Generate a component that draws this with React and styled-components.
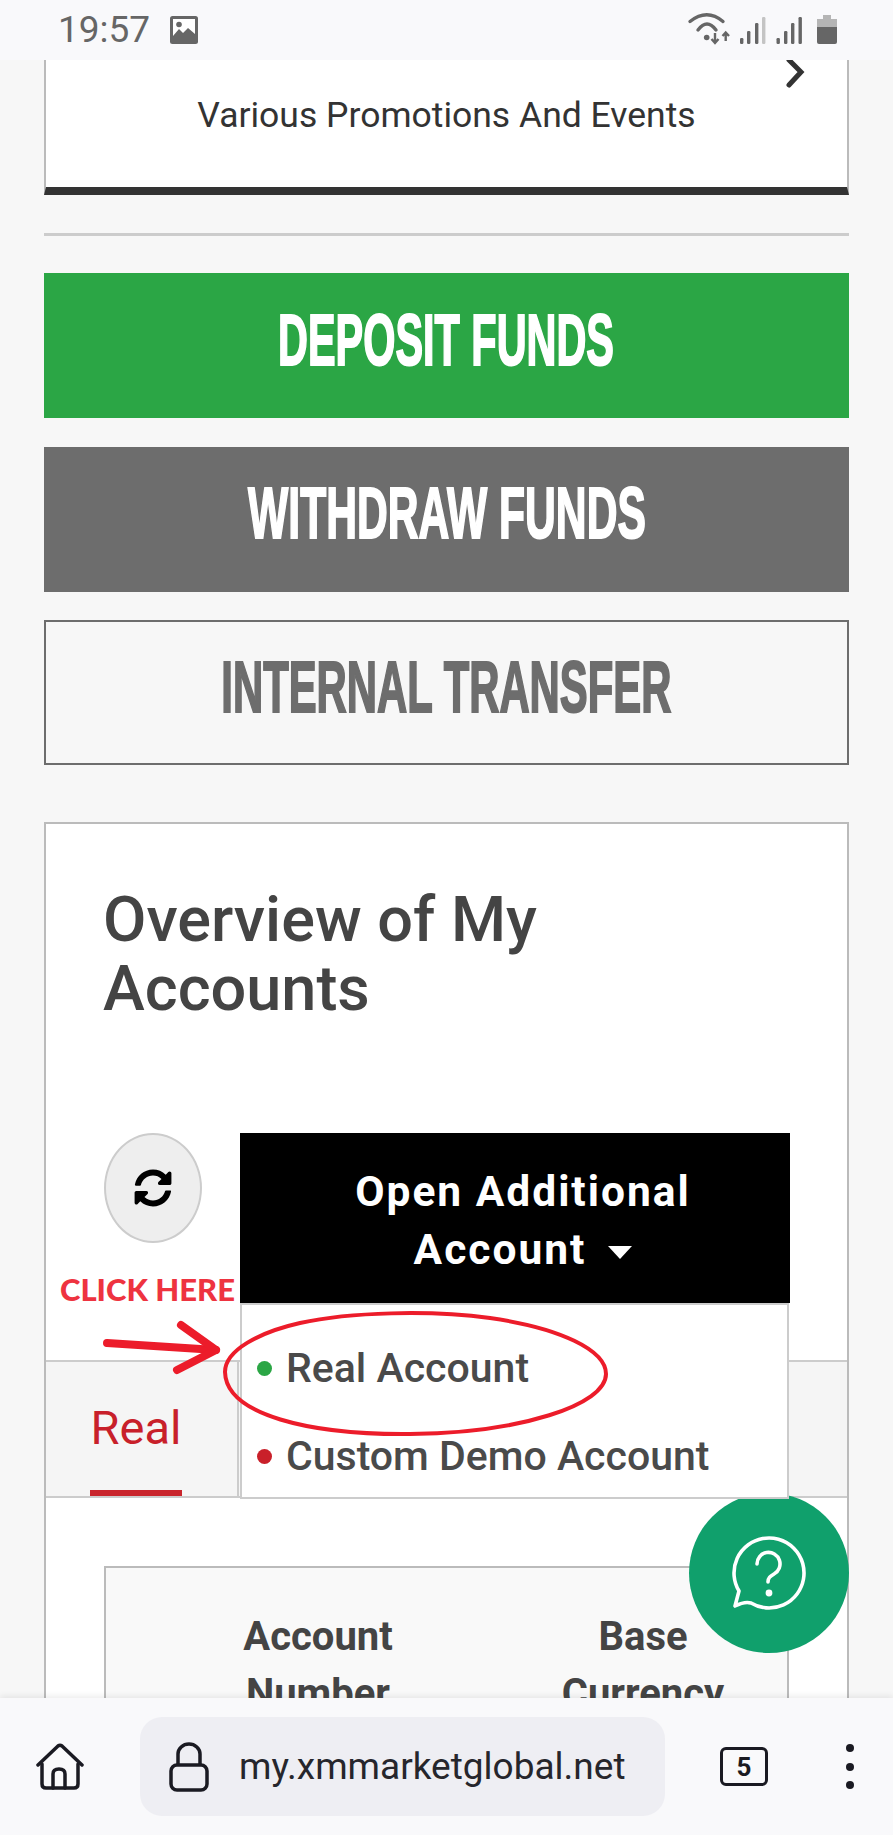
import React from 'react'
import styled, { createGlobalStyle } from 'styled-components'
import { FaSyncAlt } from 'react-icons/fa'

const GlobalStyle = createGlobalStyle`
  * { box-sizing: border-box; }
  html, body { margin: 0; padding: 0; background: #f7f7f7; }
  body { font-family: Roboto, "Liberation Sans", sans-serif; }
`

const Screen = styled.div`
  position: relative;
  width: 893px;
  height: 1835px;
  display: flex;
  flex-direction: column;
  overflow: hidden;
  background: #f7f7f7;
`

const StatusBar = styled.header`
  height: 60px;
  flex: none;
  display: flex;
  align-items: center;
  justify-content: space-between;
  padding: 0 43px 0 58px;
  background: #f9f9fb;
`

const StatusLeft = styled.div`
  display: flex;
  align-items: center;
  gap: 20px;
`

const Time = styled.span`
  font-size: 37px;
  line-height: 60px;
  color: #666;
`

const Main = styled.main`
  position: relative;
  flex: 1;
  min-height: 0;
  overflow: hidden;
  padding: 0 44px;
`

const PromoCard = styled.section`
  position: relative;
  height: 135px;
  display: flex;
  justify-content: center;
  padding-top: 31px;
  background: #fff;
  border-left: 2px solid #bbb;
  border-right: 2px solid #bbb;
  border-bottom: 8px solid #333;
  font-size: 35.5px;
  line-height: 48px;
  color: #333;
`

const Chevron = styled.svg`
  position: absolute;
  right: 40px;
  top: 0;
`

const Rule = styled.hr`
  height: 3px;
  margin: 38px 0 37px;
  border: 0;
  background: #ccc;
`

const ActionList = styled.div`
  display: flex;
  flex-direction: column;
  gap: 28.5px;
`

const ActionButton = styled.button`
  height: 145px;
  display: flex;
  align-items: center;
  justify-content: center;
  padding: 0 0 12px;
  font-family: "Liberation Sans", Arial, sans-serif;
  font-weight: 700;
  font-size: 72px;
  line-height: 1;
  -webkit-text-stroke: 2px ${p => p.$color};
  background: ${p => p.$bg};
  color: ${p => p.$color};
  border: ${p => (p.$outlined ? '2px solid #6d6d6d' : '0')};
`

const Squeezed = styled.span`
  display: inline-block;
  white-space: nowrap;
  transform: scaleX(${p => p.$x});
`

const AccountsCard = styled.section`
  margin-top: 57px;
  background: #fff;
  border: 2px solid #bbb;
  height: 1000px;
`

const CardHead = styled.div`
  padding: 61px 58px 57px;
`

const Title = styled.h2`
  margin: 0 0 110px -1px;
  font-size: 63px;
  line-height: 69px;
  font-weight: 500;
  color: #444;
`

const Toolbar = styled.div`
  display: flex;
  align-items: flex-start;
  gap: 38px;
`

const RefreshButton = styled.button`
  width: 98px;
  height: 110px;
  flex: none;
  display: flex;
  align-items: center;
  justify-content: center;
  padding: 0;
  background: #eee;
  border: 2px solid #ccc;
  border-radius: 50%;
  color: #000;
  font-size: 38px;
`

const OpenWrap = styled.div`
  position: relative;
  width: 550px;
  flex: none;
  z-index: 3;
`

const OpenButton = styled.button`
  display: block;
  width: 100%;
  height: 170px;
  padding: 6px 52px 0 68px;
  background: #000;
  color: #fff;
  border: 0;
  font-family: Roboto, sans-serif;
  font-weight: 700;
  font-size: 42.5px;
  line-height: 58px;
  letter-spacing: 2px;
  text-align: center;
`

const Caret = styled.span`
  display: inline-block;
  margin-left: 22px;
  vertical-align: middle;
  border-left: 12px solid transparent;
  border-right: 12px solid transparent;
  border-top: 13px solid #fff;
`

const Dropdown = styled.ul`
  position: absolute;
  top: 100%;
  left: 0;
  width: 549px;
  height: 196px;
  margin: 0;
  padding: 38px 0 0;
  list-style: none;
  background: #fff;
  border: 2px solid #ccc;
  display: flex;
  flex-direction: column;
  gap: 38px;
`

const DropdownItem = styled.li`
  display: flex;
  align-items: center;
  gap: 14px;
  height: 50px;
  padding-left: 15px;
  font-size: 41px;
  font-weight: 500;
  color: #4a4a4a;
  &::before {
    content: '';
    width: 15px;
    height: 15px;
    border-radius: 50%;
    background: ${p => p.$dot};
  }
`

const Tabs = styled.div`
  height: 138px;
  background: #f5f5f5;
  border-top: 2px solid #ccc;
  border-bottom: 2px solid #ccc;
`

const Tab = styled.div`
  position: relative;
  width: 193px;
  height: 100%;
  padding: 38px 11px 0 0;
  text-align: center;
  border-right: 2px solid #ccc;
  font-size: 47px;
  line-height: 56px;
  color: #c8202a;
  &::after {
    content: '';
    position: absolute;
    left: 44px;
    bottom: 0;
    width: 92px;
    height: 6px;
    background: #c9252c;
  }
`

const TableBox = styled.div`
  margin: 68px 58px 0;
  padding-top: 40px;
  height: 400px;
  background: #f9f9f9;
  border: 2px solid #bbb;
  display: grid;
  grid-template-columns: 424px 226px;
  align-content: start;
`

const HeadCell = styled.div`
  text-align: center;
  font-size: 40px;
  line-height: 57px;
  font-weight: 700;
  color: #444;
`

const HelpFab = styled.button`
  position: absolute;
  right: 44px;
  bottom: 45px;
  z-index: 2;
  width: 160px;
  height: 160px;
  padding: 0;
  border: 0;
  border-radius: 50%;
  background: #10a06c;
  display: flex;
`

const BottomBar = styled.footer`
  position: relative;
  z-index: 4;
  height: 137px;
  flex: none;
  display: flex;
  align-items: center;
  padding: 0 0 0 36px;
  background: #f9f9fb;
  box-shadow: 0 -2px 6px rgba(0, 0, 0, 0.08);
`

const UrlPill = styled.div`
  width: 525px;
  height: 99px;
  margin: 0 55px 0 56px;
  display: flex;
  align-items: center;
  gap: 30px;
  padding-left: 29px;
  background: #eeeef3;
  border-radius: 22px;
  font-size: 37px;
  color: #26262c;
`

const TabCount = styled.div`
  width: 48px;
  height: 39px;
  flex: none;
  display: flex;
  align-items: center;
  justify-content: center;
  border: 3.5px solid #1a1a22;
  border-radius: 6px;
  font-size: 26px;
  font-weight: 700;
  color: #1a1a22;
`

const MenuDots = styled.div`
  margin-left: 78px;
  display: flex;
  flex-direction: column;
  gap: 10.5px;
  span {
    width: 8px;
    height: 8px;
    border-radius: 50%;
    background: #1a1a22;
  }
`

const ClickHere = styled.div`
  position: absolute;
  left: 60px;
  top: 1271px;
  z-index: 5;
  font-family: Lato, "Open Sans", sans-serif;
  font-weight: 900;
  font-size: 31px;
  line-height: 36px;
  color: #ee3340;
`

const Markup = styled.svg`
  position: absolute;
  left: 0;
  top: 1300px;
  z-index: 5;
  pointer-events: none;
`

const ImageIcon = () => (
  <svg width="28" height="28" viewBox="0 0 28 28">
    <rect width="28" height="28" rx="2.5" fill="#666" />
    <rect x="3" y="3" width="22" height="17" fill="#fff" />
    <circle cx="9" cy="8.5" r="2.8" fill="#666" />
    <path d="M3 20 L9 13 L13 17 L18 12 L25 18 V21 H3Z" fill="#666" />
  </svg>
)

const StatusIcons = () => (
  <svg width="170" height="60" viewBox="0 0 170 60">
    <g fill="none" stroke="#666" strokeWidth="3.4" strokeLinecap="round">
      <path d="M10 21.5 Q27 8 43 21.5" />
      <path d="M18 30 Q27 18 36 30" />
    </g>
    <circle cx="26.7" cy="37.5" r="2.8" fill="#666" />
    <g fill="none" stroke="#666" strokeWidth="2.4">
      <path d="M35 33 V42 M31.5 39 L35 43 L38.5 39" />
      <path d="M45.7 41 V33 M42.5 36 L45.7 32.5 L49 36" />
    </g>
    <g fill="#666">
      <rect x="60" y="38" width="3.4" height="6" rx="1.2" />
      <rect x="67" y="31" width="3.4" height="13" rx="1.2" />
      <rect x="75" y="23" width="3.4" height="21" rx="1.2" />
      <rect x="82" y="17" width="3.4" height="27" rx="1.2" fill="#c4c4c4" />
      <rect x="96.5" y="38" width="3.4" height="6" rx="1.2" />
      <rect x="104" y="31" width="3.4" height="13" rx="1.2" />
      <rect x="111" y="23" width="3.4" height="21" rx="1.2" />
      <rect x="118.5" y="17" width="3.4" height="27" rx="1.2" />
    </g>
    <path d="M143 15 H151 V19 H157 V27 H137 V19 H143Z" fill="#b5b5b5" />
    <path d="M137 27 H157 V42 a2 2 0 0 1 -2 2 H139 a2 2 0 0 1 -2 -2Z" fill="#666" />
  </svg>
)

const HelpIcon = () => (
  <svg width="160" height="160" viewBox="0 0 160 160" fill="none" stroke="#fff" strokeWidth="3.6" strokeLinecap="round" strokeLinejoin="round">
    <path d="M50 98 A35 35 0 1 1 62 110 Q56 108 46 113 Z" />
    <path d="M68 71 a11.5 11.5 0 1 1 17 10 c-4 2.5 -6 4 -6 8" />
    <circle cx="80" cy="100" r="1.6" fill="#fff" />
  </svg>
)

const HomeIcon = () => (
  <svg width="48" height="48" viewBox="0 0 48 48" fill="none" stroke="#1a1a22" strokeWidth="3.5" strokeLinecap="round" strokeLinejoin="round">
    <path d="M2 22 L22 3 Q24 1.5 26 3 L46 22" />
    <path d="M6 21 V41 Q6 45 10 45 H38 Q42 45 42 41 V21" />
    <path d="M17 45 V31 Q17 26 23 26 Q29 26 29 31 V45" />
  </svg>
)

const LockIcon = () => (
  <svg width="40" height="50" viewBox="0 0 40 50" fill="none" stroke="#1a1a22" strokeWidth="3.5" strokeLinejoin="round">
    <path d="M9 23 V12 A11 10 0 0 1 31 12 V23" />
    <rect x="2" y="23" width="36" height="25" rx="6" />
  </svg>
)

export default function App() {
  return (
    <Screen>
      <GlobalStyle />
      <StatusBar>
        <StatusLeft>
          <Time>19:57</Time>
          <ImageIcon />
        </StatusLeft>
        <StatusIcons />
      </StatusBar>

      <Main>
        <PromoCard>
          Various Promotions And Events
          <Chevron width="22" height="28" viewBox="0 0 22 28" fill="none" stroke="#333" strokeWidth="5" strokeLinecap="round">
            <path d="M4 0 L16 12 L4 25" />
          </Chevron>
        </PromoCard>
        <Rule />

        <ActionList>
          <ActionButton $bg="#2ba645" $color="#fff"><Squeezed $x={0.575}>DEPOSIT FUNDS</Squeezed></ActionButton>
          <ActionButton $bg="#6d6d6d" $color="#fff"><Squeezed $x={0.592}>WITHDRAW FUNDS</Squeezed></ActionButton>
          <ActionButton $bg="#f7f7f7" $color="#6d6d6d" $outlined><Squeezed $x={0.581}>INTERNAL TRANSFER</Squeezed></ActionButton>
        </ActionList>

        <AccountsCard>
          <CardHead>
            <Title>Overview of My Accounts</Title>
            <Toolbar>
              <RefreshButton><FaSyncAlt /></RefreshButton>
              <OpenWrap>
                <OpenButton>Open Additional Account<Caret /></OpenButton>
                <Dropdown>
                  <DropdownItem $dot="#2ba645">Real Account</DropdownItem>
                  <DropdownItem $dot="#c9202a">Custom Demo Account</DropdownItem>
                </Dropdown>
              </OpenWrap>
            </Toolbar>
          </CardHead>
          <Tabs>
            <Tab>Real</Tab>
          </Tabs>
          <TableBox>
            <HeadCell>Account<br />Number</HeadCell>
            <HeadCell>Base<br />Currency</HeadCell>
          </TableBox>
        </AccountsCard>

        <HelpFab><HelpIcon /></HelpFab>
      </Main>

      <BottomBar>
        <HomeIcon />
        <UrlPill>
          <LockIcon />
          my.xmmarketglobal.net
        </UrlPill>
        <TabCount>5</TabCount>
        <MenuDots><span /><span /><span /></MenuDots>
      </BottomBar>

      <ClickHere>CLICK HERE</ClickHere>
      <Markup width="640" height="150" viewBox="0 0 640 150" fill="none" stroke="#ec1c2a" strokeLinecap="round" strokeLinejoin="round">
        <path d="M107 43 L216 50" strokeWidth="8" />
        <path d="M181 25 L216 50 L177 70" strokeWidth="8" />
        <path d="M300 23 C350 12 430 10 490 18 C560 28 606 50 606 74 C606 105 520 133 410 134 C310 135 226 115 225 72 C225 50 260 32 300 23Z" strokeWidth="4" />
      </Markup>
    </Screen>
  )
}
